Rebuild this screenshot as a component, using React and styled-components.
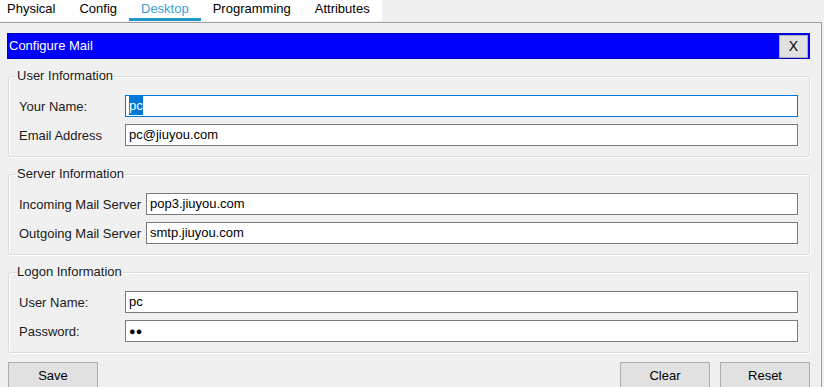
import styled, { createGlobalStyle } from "styled-components";

const GlobalStyle = createGlobalStyle`
    html, body {
        margin: 0;
        padding: 0;
        background: #f0f0f0;
    }
    * {
        box-sizing: border-box;
    }
`;

const Page = styled.div`
    width: 824px;
    height: 387px;
    overflow: hidden;
    background: #f0f0f0;
    font-family: "Liberation Sans", Arial, sans-serif;
    font-size: 13px;
    color: #000;
`;

const TabBar = styled.div`
    display: flex;
    height: 22px;
`;

const TabStrip = styled.div`
    display: flex;
    background: #fff;
    height: 21px;
`;

const Tab = styled.div`
    height: 21px;
    line-height: 18px;
    padding: 0 12px;
    color: ${(p) => (p.$active ? "#3a9fd2" : "#000")};
    border-bottom: 3px solid ${(p) => (p.$active ? "#1e97c9" : "transparent")};
    &:first-child {
        padding-left: 7px;
    }
`;

const Panel = styled.div`
    width: 822px;
    border-top: 1px solid #a0a0a0;
    border-right: 1px solid #a0a0a0;
    padding: 10px 11px 0 7px;
    height: 366px;
`;

const TitleBar = styled.div`
    display: flex;
    align-items: center;
    justify-content: space-between;
    height: 26px;
    background: #0000ff;
    border: 1px solid #0000c8;
    color: #fff;
    padding: 0 1px;
`;

const TitleText = styled.span`
    line-height: 24px;
`;

const CloseButton = styled.div`
    width: 29px;
    height: 23px;
    background: #e1e1e1;
    border: 1px solid #adadad;
    color: #000;
    display: flex;
    align-items: center;
    justify-content: center;
    font-size: 14px;
`;

const Group = styled.fieldset`
    margin: 9px 0 0 1px;
    padding: 11px 11px 10px 10px;
    border: 1px solid #dcdcdc;
    border-radius: 3px;
    box-shadow: inset 1px 1px 0 #fff, 1px 1px 0 #fff;
    min-width: 0;
`;

const Legend = styled.legend`
    padding: 0 1px 0 0;
    margin-left: -2px;
    line-height: 16px;
    color: #1a1a1a;
`;

const Rows = styled.div`
    display: grid;
    grid-template-columns: ${(p) => p.$label}px 1fr;
    row-gap: 7px;
    align-items: center;
`;

const Label = styled.div`
    color: #1a1a1a;
    white-space: nowrap;
`;

const Field = styled.div`
    height: 22px;
    background: #fff;
    border: 1px solid ${(p) => (p.$focus ? "#0078d7" : "#7a7a7a")};
    padding: 0 3px;
    line-height: 20px;
    white-space: nowrap;
    overflow: hidden;
`;

const Selected = styled.span`
    background: #0078d7;
    color: #fff;
    padding: 2px 0;
`;

const Dots = styled.span`
    font-size: 11px;
    vertical-align: 1px;
`;

const ButtonRow = styled.div`
    display: flex;
    gap: 10px;
    margin: 9px 0 0 1px;
`;

const Spacer = styled.div`
    flex: 1;
`;

const Button = styled.div`
    width: 90px;
    height: 27px;
    background: #e1e1e1;
    border: 1px solid #adadad;
    display: flex;
    align-items: center;
    justify-content: center;
`;

const tabs = ["Physical", "Config", "Desktop", "Programming", "Attributes"];

function Row({ label, children, focus }) {
    return (
        <>
            <Label>{label}</Label>
            <Field $focus={focus}>{children}</Field>
        </>
    );
}

export default function App() {
    return (
        <Page>
            <GlobalStyle />
            <TabBar>
                <TabStrip>
                    {tabs.map((t) => (
                        <Tab key={t} $active={t === "Desktop"}>{t}</Tab>
                    ))}
                </TabStrip>
            </TabBar>
            <Panel>
                <TitleBar>
                    <TitleText>Configure Mail</TitleText>
                    <CloseButton>X</CloseButton>
                </TitleBar>

                <Group>
                    <Legend>User Information</Legend>
                    <Rows $label={106}>
                        <Row label="Your Name:" focus>
                            <Selected>pc</Selected>
                        </Row>
                        <Row label="Email Address">pc@jiuyou.com</Row>
                    </Rows>
                </Group>

                <Group>
                    <Legend>Server Information</Legend>
                    <Rows $label={127}>
                        <Row label="Incoming Mail Server">pop3.jiuyou.com</Row>
                        <Row label="Outgoing Mail Server">smtp.jiuyou.com</Row>
                    </Rows>
                </Group>

                <Group>
                    <Legend>Logon Information</Legend>
                    <Rows $label={106}>
                        <Row label="User Name:">pc</Row>
                        <Row label="Password:">
                            <Dots>●●</Dots>
                        </Row>
                    </Rows>
                </Group>

                <ButtonRow>
                    <Button>Save</Button>
                    <Spacer />
                    <Button>Clear</Button>
                    <Button>Reset</Button>
                </ButtonRow>
            </Panel>
        </Page>
    );
}
